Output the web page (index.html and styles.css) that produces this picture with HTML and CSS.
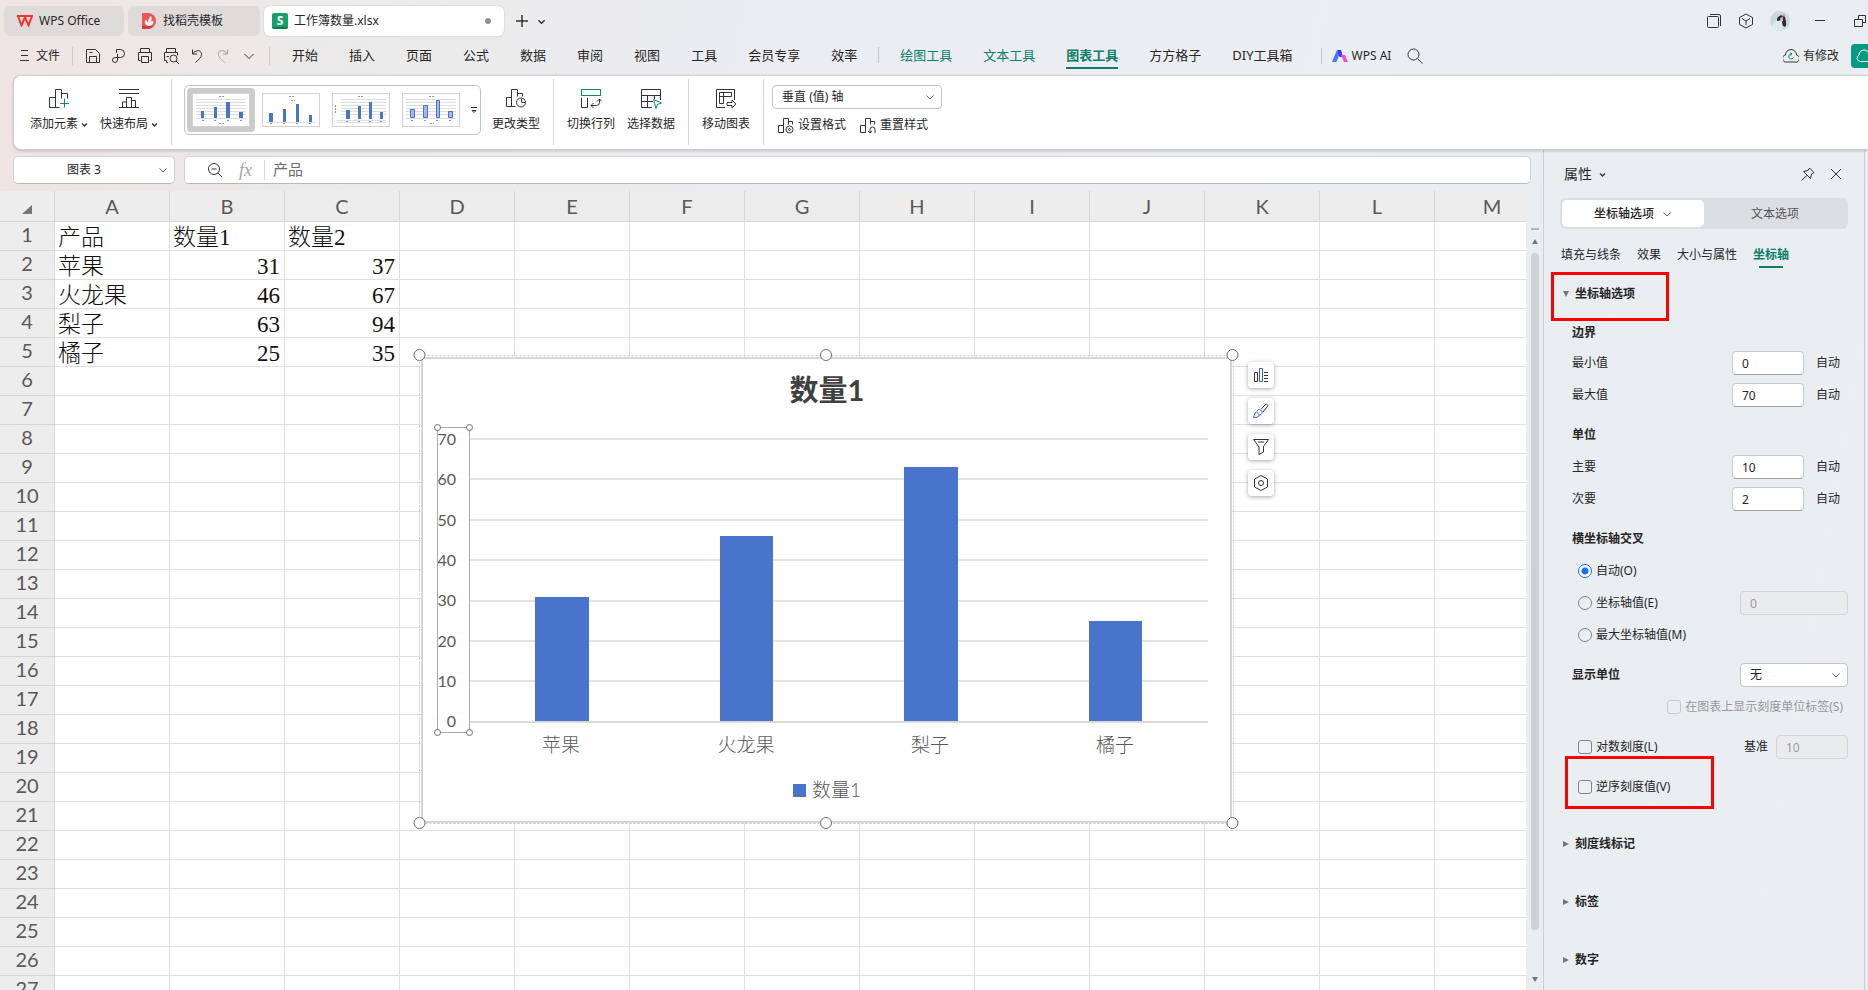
FILE: index.html
```html
<!DOCTYPE html>
<html lang="zh-CN">
<head>
    <meta charset="UTF-8">
    <meta name="viewport" content="width=device-width, initial-scale=1.0">
    <title>工作簿数量.xlsx</title>
    <link rel="stylesheet" href="styles.css">
</head>
<body>
    <!-- shared icons -->
    <svg class="defs" aria-hidden="true">
        <symbol id="i-chevron" viewBox="0 0 10 10"><path d="M1.500 3.500 5 7l3.500-3.500"/></symbol>
    </svg>

    <header class="titlebar">
        <button class="doc-tab">
            <svg class="logo" width="16" height="12" viewBox="0 0 16 12"><path d="M0 1h15L11.500 10.500 7.500 1M1 1l3.500 9.500L8.500 1"/></svg>
            WPS Office
        </button>
        <button class="doc-tab tab-template">
            <svg class="flat" width="14" height="16" viewBox="0 0 14 16"><path d="M0 0h6a8 8 0 0 1 0 16H0z" fill="#f25555"/><path d="M0 13h11a8 8 0 0 1-5 3H0z" fill="#d63a3f"/><path d="M6.500 13C3 12 2.500 9.500 3 7c2 .5 3 2 3.500 3.500C6 7 7 4.500 9 3c1 3 .5 5-.8 7C9 8.500 10 8 11.500 8c0 3-2 5-5 5z" fill="#fff"/></svg>
            找稻壳模板
        </button>
        <button class="doc-tab active">
            <span class="sheet-logo">S</span>
            工作簿数量.xlsx
            <span class="unsaved"></span>
        </button>
        <button class="icon-btn new-tab" aria-label="新建">
            <svg width="16" height="16" viewBox="0 0 16 16" stroke-width="1.500"><path d="M8 2v12M2 8h12"/></svg>
        </button>
        <button class="icon-btn" aria-label="更多标签">
            <svg width="9" height="9" stroke-width="1.500"><use href="#i-chevron"/></svg>
        </button>
        <div class="window-tools">
            <button class="icon-btn" aria-label="标签列表"><svg width="16" height="16" viewBox="0 0 16 16"><rect x="1.500" y="3.500" width="11" height="11" rx="1"/><path d="M4 1.500h9a1.500 1.500 0 0 1 1.500 1.500v10"/></svg></button>
            <button class="icon-btn" aria-label="应用"><svg width="16" height="16" viewBox="0 0 16 16"><path d="M8 1l6.500 3.500v7L8 15l-6.500-3.500v-7zM4 5.500l4 2.500 4-2.500M8 8v4"/></svg></button>
            <button class="icon-btn" aria-label="账号"><svg class="flat" width="20" height="20" viewBox="0 0 20 20"><circle cx="10" cy="10" r="10" fill="#cbd8df"/><path d="M2 16c1-4 4-8 7-8l3 2 1 9a10 10 0 0 1-11-3z" fill="#dcebee"/><path d="M7 8c1-4 7-5 8-2 1 4 2 8 0 10-3-1-3-4-3-7L7 10z" fill="#2e2a35"/><path d="M10 7l3-1v4l-2 1z" fill="#e6b8a8"/><path d="M12 3.500h3v2h-3z" fill="#d9a560"/></svg></button>
            <button class="icon-btn win-min" aria-label="最小化"><svg width="12" height="12" viewBox="0 0 12 12"><path d="M1 5.500h10"/></svg></button>
            <button class="icon-btn win-max" aria-label="还原"><svg width="14" height="14" viewBox="0 0 14 14"><path d="M1.500 5.500h8v7h-8zM5.500 5V1.500h7v7H10"/></svg></button>
        </div>
    </header>

    <nav class="menubar">
        <button class="file-btn">
            <svg width="9" height="12" viewBox="0 0 9 12"><path d="M1 .5h7M1 5.500h7M0 10.500h9"/></svg>
            文件
        </button>
        <div class="quick">
            <button class="icon-btn" aria-label="保存"><svg width="18" height="18" viewBox="0 0 18 18"><path d="M2.500 15.500v-13h9l4 4v9zM5.500 15v-5.500h7V15M5.500 5.500h3"/></svg></button>
            <button class="icon-btn" aria-label="输出PDF"><svg width="18" height="18" viewBox="0 0 18 18"><path d="M6.500 6V2.500h4a4 4 0 0 1 0 8H5a2.500 2.500 0 1 0 2.500 2.500V7"/></svg></button>
            <button class="icon-btn" aria-label="打印"><svg width="18" height="18" viewBox="0 0 18 18"><path d="M4.500 5.500v-4h9v4M4.500 13.500h-2v-8h13v8h-2M5.500 9.500h7v6h-7z"/></svg></button>
            <button class="icon-btn" aria-label="打印预览"><svg width="18" height="18" viewBox="0 0 18 18"><path d="M4.500 5.500v-4h9v4M6 15.500H4.500v-2h-2v-8h13v3M4.500 9.500H7"/><circle cx="11.500" cy="11.500" r="3.500"/><path d="M14 14l3 3"/></svg></button>
            <button class="icon-btn" aria-label="撤销"><svg width="18" height="18" viewBox="0 0 18 18"><path d="M4.500 2.500v4.500H9M4.500 7C7 3 13.500 2 13.500 7.500c0 3-3 5-6 8"/></svg></button>
            <button class="icon-btn faded" aria-label="恢复"><svg width="18" height="18" viewBox="0 0 18 18"><path d="M13.500 2.500v4.500H9M13.500 7C11 3 4.500 2 4.500 7.500c0 3 3 5 6 8"/></svg></button>
            <button class="icon-btn" aria-label="自定义快速访问"><svg width="18" height="18" viewBox="0 0 18 18"><path d="M4.500 7 9 11.500 13.500 7"/></svg></button>
        </div>
        <div class="menu">
            <button>开始</button>
            <button>插入</button>
            <button>页面</button>
            <button>公式</button>
            <button>数据</button>
            <button>审阅</button>
            <button>视图</button>
            <button>工具</button>
            <button>会员专享</button>
            <button>效率</button>
        </div>
        <div class="menu context">
            <button class="green">绘图工具</button>
            <button class="green">文本工具</button>
            <button class="green current">图表工具</button>
            <button>方方格子</button>
            <button>DIY工具箱</button>
        </div>
        <button class="ai-btn">
            <svg class="flat" width="16" height="14" viewBox="0 0 16 14"><path d="M5 1h4L4.500 13H0z" fill="#3f7bff"/><path d="M5.500 1H9l2 7H7.500z" fill="#3b3bf0"/><path d="M9 6h4l3 7h-4z" fill="#f04fd0"/></svg>
            WPS AI
        </button>
        <button class="icon-btn" aria-label="搜索"><svg width="16" height="16" viewBox="0 0 16 16"><circle cx="6.500" cy="6.500" r="5.500"/><path d="M10.500 10.500l5 5"/></svg></button>
        <button class="cloud-btn">
            <svg width="16" height="14" viewBox="0 0 16 14"><path d="M4 13A3.500 3.500 0 0 1 2.500 6a5.500 5.500 0 0 1 11 0A3.500 3.500 0 0 1 12 13z"/><path class="green-line" d="M10.500 8.500a2.500 2.500 0 1 1-2-3.500M7.500 3.500 9 5 7.500 6.500"/></svg>
            有修改
        </button>
        <button class="share-btn" aria-label="分享"><svg width="18" height="14" viewBox="0 0 18 14"><path d="M5 12.500A3.500 3.500 0 0 1 4 6a5 5 0 0 1 10 0v6.500z"/></svg></button>
    </nav>

    <section class="ribbon">
        <div class="group first">
            <button class="tool">
                <svg width="22" height="22" viewBox="0 0 22 22"><path d="M1.500 20.500v-10h6v10zM7.500 20.500V2.500h6v9M13.500 6.500h6v5M7.500 20.500h4"/><path class="green-line" d="M16.500 11.500v9M12 16.500h9"/></svg>
                <span>添加元素<svg width="7" height="7" stroke-width="2"><use href="#i-chevron"/></svg></span>
            </button>
            <button class="tool">
                <svg width="22" height="22" viewBox="0 0 22 22"><path d="M1 2.500h20M1 6.500h20M1 20.500h20M4.500 20v-5h4M8.500 20V10.500h5V20M13.500 13.500h4V20"/></svg>
                <span>快速布局<svg width="7" height="7" stroke-width="2"><use href="#i-chevron"/></svg></span>
            </button>
        </div>
        <div class="group styles">
            <div class="gallery">
                <button class="thumb selected" aria-label="样式1"><svg width="56" height="32" viewBox="0 0 56 32"><path class="lines" d="M3 5.500h50M3 8.500h50M3 11.500h50M3 14.500h50M3 17.500h50M3 20.500h50M3 24.500h50"/><path class="cols" d="M8 17h3v7H8zM21 13h3v11h-3zM33 8h4v16h-4zM46 18h4v6h-4z"/><path class="marks" d="M26 2.500h5M9 26.500h3M21 26.500h3M34 26.500h3M47 26.500h3M26 29.500h5"/></svg></button>
                <button class="thumb" aria-label="样式2"><svg width="56" height="32" viewBox="0 0 56 32"><path class="lines" d="M3 28.500h50"/><path class="cols" d="M6 19h4v9H6zM20 15h3v13h-3zM33 10h3v18h-3zM46 21h3v7h-3z"/><path class="marks" d="M26 2.500h5M7 29.500h3M20 29.500h3M33 29.500h3M46 29.500h3M28 6.500h4"/></svg></button>
                <button class="thumb" aria-label="样式3"><svg width="56" height="32" viewBox="0 0 56 32"><path class="lines" d="M8 5.500h45M8 8.500h45M8 11.500h45M8 14.500h45M8 17.500h45M8 20.500h45M4 26.500h49M4 28.500h49"/><path class="cols" d="M13 16h4v9h-4zM25 12h3v13h-3zM36 8h3v17h-3zM47 18h3v7h-3z"/><path class="marks" d="M25 2.500h5M2.500 11v8M13 27.500h3M25 27.500h3M36 27.500h3M47 27.500h3"/></svg></button>
                <button class="thumb" aria-label="样式4"><svg width="56" height="32" viewBox="0 0 56 32"><path class="lines" d="M3 5.500h50M3 8.500h50M3 11.500h50M3 14.500h50M3 17.500h50M3 20.500h50M3 24.500h50"/><path class="cols pale" d="M7.500 15.500h4v8h-4zM20.500 11.500h4v12h-4zM33.500 6.500h3v17h-3zM45.500 17.500h4v6h-4z"/><path class="marks" d="M26 2.500h5M8 26.500h3M21 26.500h3M33 26.500h3M46 26.500h3M27 29.500h4"/></svg></button>
                <button class="icon-btn more" aria-label="更多样式"><svg width="8" height="8" viewBox="0 0 8 8"><path d="M1 1.500h6M2 4.500h4L4 6.500z"/></svg></button>
            </div>
            <button class="tool">
                <svg width="22" height="22" viewBox="0 0 22 22"><path d="M1.500 19.500v-9h5v9zM6.500 19.500V2.500h6v7M12.500 6.500h5v3M6.500 19.500h4"/><circle cx="16" cy="15.500" r="4.500"/><path d="M16.500 12v3.500H20"/></svg>
                <span>更改类型</span>
            </button>
        </div>
        <div class="group">
            <button class="tool">
                <svg width="22" height="22" viewBox="0 0 22 22"><rect class="green-line" x="1.500" y="2.500" width="19" height="6"/><path d="M1.500 11v9.500h6V11M11 18.500h5.500a3 3 0 0 0 3-3V12M13.500 16 11 18.500l2.500 2.500M17 14.500l2.500-2.500 2.500 2.500"/></svg>
                <span>切换行列</span>
            </button>
            <button class="tool">
                <svg width="22" height="22" viewBox="0 0 22 22"><path d="M12 20.500H1.500v-18h19V13M1.500 8.500h19M1.500 14.500H13M7.500 8.500v12M14.500 8.500V12"/><path class="green-line" d="M13.500 12.500l8 3.500-4 1.500-1.500 4z"/></svg>
                <span>选择数据</span>
            </button>
        </div>
        <div class="group">
            <button class="tool">
                <svg width="22" height="22" viewBox="0 0 22 22"><path d="M10 20.500H1.500v-18h18V13M4.500 16.500v-11h12v4h-12M8.500 5.500v11h-4"/><path d="M12 15.500h5V13l4 4-4 4v-2.500h-5z"/></svg>
                <span>移动图表</span>
            </button>
        </div>
        <div class="format">
            <div class="select-box">
                <select aria-label="图表元素"><option>垂直 (值) 轴</option></select>
                <svg width="10" height="10"><use href="#i-chevron"/></svg>
            </div>
            <div class="format-row">
                <button><svg width="16" height="17" viewBox="0 0 16 17"><path d="M.5 15.500v-7h5v7zM5.500 15.500v-14h5v6M10.500 4.500h4v3"/><circle cx="11.500" cy="12.500" r="3.500"/><circle cx="11.500" cy="12.500" r="1"/></svg>设置格式</button>
                <button><svg width="16" height="17" viewBox="0 0 16 17"><path d="M.5 15.500v-7h5v7zM5.500 15.500v-14h5v6M10.500 4.500h4v3M10 16v-3.500a2.500 2.500 0 0 1 5 0V16M8 14l2 2 2-2"/></svg>重置样式</button>
            </div>
        </div>
    </section>

    <main class="workspace">
        <div class="book">
            <div class="formula-bar">
                <div class="name-box">
                    <input type="text" value="图表 3" aria-label="名称框">
                    <svg width="10" height="10"><use href="#i-chevron"/></svg>
                </div>
                <div class="formula-box">
                    <button class="icon-btn" aria-label="缩小"><svg width="16" height="16" viewBox="0 0 16 16"><circle cx="7" cy="7" r="5.500"/><path d="M4.500 7h5M11 11l4 4"/></svg></button>
                    <span class="fx">fx</span>
                    <input type="text" value="产品" aria-label="编辑栏">
                </div>
            </div>
            <div class="sheet">
                <div class="grid-area">
                    <table class="cells" id="cells"></table>

                    <!-- chart object floating over the cells -->
                    <svg class="chart" width="828" height="484" viewBox="0 0 828 484">
                        <rect x="6.500" y="7.500" width="814" height="468" class="chart-dots"/>
                        <rect x="9" y="10" width="809" height="464" class="chart-frame"/>
                        <text x="414" y="53" class="chart-title">数量1</text>
                        <path class="gridlines" d="M57 91h738M57 131h738M57 172h738M57 212h738M57 253h738M57 293h738M57 333h738"/>
                        <path class="axis" d="M57 374h738"/>
                        <g class="bars">
                            <rect x="122" y="249" width="54" height="124"/>
                            <rect x="307" y="188" width="53" height="185"/>
                            <rect x="491" y="119" width="54" height="254"/>
                            <rect x="676" y="273" width="53" height="100"/>
                        </g>
                        <g class="ticks">
                            <text x="43" y="97">70</text>
                            <text x="43" y="137">60</text>
                            <text x="43" y="178">50</text>
                            <text x="43" y="218">40</text>
                            <text x="43" y="258">30</text>
                            <text x="43" y="299">20</text>
                            <text x="43" y="339">10</text>
                            <text x="43" y="379">0</text>
                        </g>
                        <g class="cats">
                            <text x="148" y="404">苹果</text>
                            <text x="333" y="404">火龙果</text>
                            <text x="517" y="404">梨子</text>
                            <text x="702" y="404">橘子</text>
                        </g>
                        <rect x="380" y="436" width="13" height="13" fill="#4874cb"/>
                        <text x="399" y="449" class="legend">数量1</text>
                        <rect x="24.500" y="79.500" width="32" height="305" class="axis-box"/>
                        <g class="knobs">
                            <circle cx="24.500" cy="79.500" r="3"/>
                            <circle cx="56.500" cy="79.500" r="3"/>
                            <circle cx="24.500" cy="384.500" r="3"/>
                            <circle cx="56.500" cy="384.500" r="3"/>
                            <circle cx="6.500" cy="7" r="5.500"/>
                            <circle cx="413" cy="7" r="5.500"/>
                            <circle cx="819.500" cy="7" r="5.500"/>
                            <circle cx="6.500" cy="475" r="5.500"/>
                            <circle cx="413" cy="475" r="5.500"/>
                            <circle cx="819.500" cy="475" r="5.500"/>
                        </g>
                    </svg>
                    <div class="chart-tools">
                        <button aria-label="图表元素"><svg width="16" height="16" viewBox="0 0 16 16"><path d="M1.500 5.500h3v9h-3zM11 5.500h4M11 8.500h4M11 11.500h4M11 14.500h4"/><path class="blue-line" d="M6.500 1.500h3v13h-3z"/></svg></button>
                        <button aria-label="图表样式"><svg width="16" height="16" viewBox="0 0 16 16"><path d="M8 6.500 12.500 1.500c1-1 3 .5 2 2L10 9"/><path class="blue-line" d="M.5 14.500c1-3 1-5 3-5.500l3 3c-.5 2-3 2.500-6 2.500zM4 8.500c.5-2 2-2.500 3.500-1.500L9 8.500c.5 1.500-.5 3-2 3.500"/></svg></button>
                        <button aria-label="图表筛选器"><svg width="16" height="16" viewBox="0 0 16 16"><path d="M.5 .5h15l-5 7v5.500L6 15.500V8zM5 3h6"/></svg></button>
                        <button aria-label="设置"><svg width="16" height="16" viewBox="0 0 16 16"><path d="M8 .5l6.500 3.500v8L8 15.500 1.500 12V4z"/><circle cx="8" cy="8" r="2.500"/></svg></button>
                    </div>
                </div>
                <div class="scrollbar">
                    <span class="split"></span>
                    <span class="arrow-up"></span>
                    <span class="track"></span>
                    <span class="arrow-down"></span>
                </div>
            </div>
        </div>

        <aside class="panel">
            <div class="panel-head">
                <button class="panel-title">属性<svg width="7" height="7" stroke-width="2"><use href="#i-chevron"/></svg></button>
                <button class="icon-btn pin" aria-label="固定"><svg width="14" height="14" viewBox="0 0 14 14"><path d="M8.500 1 13 5.500l-2.500 1.500L9.500 11.500 2.500 4.500 7 3.500zM6 8.500.5 13.500"/></svg></button>
                <button class="icon-btn" aria-label="关闭"><svg width="12" height="12" viewBox="0 0 12 12"><path d="M1 1l10 10M11 1 1 11"/></svg></button>
            </div>
            <div class="segment">
                <button class="on">坐标轴选项<svg width="10" height="10"><use href="#i-chevron"/></svg></button>
                <button>文本选项</button>
            </div>
            <div class="panel-tabs">
                <button>填充与线条</button>
                <button>效果</button>
                <button>大小与属性</button>
                <button class="current">坐标轴</button>
            </div>

            <button class="section open marked">坐标轴选项</button>
            <div class="options">
                <h4 class="lead">边界</h4>
                <div class="row">
                    <label for="axisMin">最小值</label>
                    <input type="text" id="axisMin" class="field" value="0"><span class="auto">自动</span>
                </div>
                <div class="row">
                    <label for="axisMax">最大值</label>
                    <input type="text" id="axisMax" class="field" value="70"><span class="auto">自动</span>
                </div>
                <h4>单位</h4>
                <div class="row">
                    <label for="unitMajor">主要</label>
                    <input type="text" id="unitMajor" class="field" value="10"><span class="auto">自动</span>
                </div>
                <div class="row">
                    <label for="unitMinor">次要</label>
                    <input type="text" id="unitMinor" class="field" value="2"><span class="auto">自动</span>
                </div>
                <h4>横坐标轴交叉</h4>
                <div class="row choice">
                    <input type="radio" name="cross" id="crossAuto" checked><label for="crossAuto">自动(O)</label>
                </div>
                <div class="row choice">
                    <input type="radio" name="cross" id="crossValue"><label for="crossValue">坐标轴值(E)</label>
                    <input type="text" class="field wide" value="0" aria-label="坐标轴值" disabled>
                </div>
                <div class="row choice">
                    <input type="radio" name="cross" id="crossMax"><label for="crossMax">最大坐标轴值(M)</label>
                </div>
                <div class="row spaced">
                    <label class="strong" for="displayUnit">显示单位</label>
                    <div class="select-box wide">
                        <select id="displayUnit"><option>无</option></select>
                        <svg width="10" height="10"><use href="#i-chevron"/></svg>
                    </div>
                </div>
                <div class="row choice unit-label">
                    <input type="checkbox" id="unitLabel" disabled><label for="unitLabel">在图表上显示刻度单位标签(S)</label>
                </div>
                <div class="row choice spaced">
                    <input type="checkbox" id="logScale"><label for="logScale">对数刻度(L)</label>
                    <label class="base" for="logBase">基准</label>
                    <input type="text" id="logBase" class="field" value="10" disabled>
                </div>
                <div class="row choice spaced marked">
                    <input type="checkbox" id="reverse"><label for="reverse">逆序刻度值(V)</label>
                </div>
            </div>
            <button class="section">刻度线标记</button>
            <button class="section">标签</button>
            <button class="section">数字</button>
        </aside>
    </main>

    <script src="script.js"></script>
</body>
</html>
```
FILE: styles.css
```css
*, *::before, *::after {
    box-sizing: border-box;
}
body {
    margin: 0;
    height: 100vh;
    display: flex;
    flex-direction: column;
    overflow: hidden;
    font-family: "Noto Sans", "Noto Sans CJK SC", sans-serif;
    font-size: 12px;
    line-height: 18px;
    color: #262626;
    background: linear-gradient(100deg, #efe5e3 0, #ebebeb 20%, #ecedf2 42%, #e9eef1 88%, #ecedf2 100%);
}
button, input, select {
    font: inherit;
    color: inherit;
}
button {
    display: flex;
    align-items: center;
    flex: none;
    padding: 0;
    border: 0;
    background: none;
    white-space: nowrap;
}
svg {
    flex: none;
    fill: none;
    stroke: #333;
}
.defs {
    display: none;
}
.flat {
    stroke: none;
}
.green-line {
    stroke: #0f8a63;
}
.blue-line {
    stroke: #2b5fe3;
}

/* title bar */
.titlebar {
    display: flex;
    align-items: center;
    height: 42px;
    padding: 0 1px 0 4px;
}
.doc-tab {
    width: 120px;
    height: 30px;
    margin-right: 4px;
    padding-left: 13px;
    gap: 6px;
    border-radius: 6px;
    background: #dfdbdb;
}
.logo {
    stroke: #f5372a;
    stroke-width: 2;
}
.tab-template {
    width: 132px;
    padding-left: 14px;
    gap: 7px;
}
.doc-tab.active {
    width: 240px;
    padding-left: 8px;
    background: #fff;
    box-shadow: 0 0 2px #bbb;
}
.sheet-logo {
    width: 16px;
    height: 16px;
    border-radius: 2px;
    border-bottom: 2px solid #0a7a4c;
    background: #16a06c;
    color: #fff;
    font-weight: 700;
    line-height: 15px;
}
.unsaved {
    width: 6px;
    height: 6px;
    margin: 0 13px 0 auto;
    border-radius: 50%;
    background: #919191;
}
.new-tab {
    margin: 0 7px 0 6px;
}
.window-tools {
    display: flex;
    align-items: center;
    gap: 16px;
    margin-left: auto;
}
.win-min {
    margin-left: 8px;
}
.win-max {
    margin-left: 11px;
}

/* menu bar */
.menubar {
    display: flex;
    align-items: center;
    height: 27px;
    margin-bottom: 6px;
    padding-left: 20px;
}
.file-btn {
    gap: 7px;
    padding-right: 12px;
}
.quick {
    display: flex;
    gap: 8px;
    padding: 0 11px;
    border-left: 1px solid #ccc;
    border-right: 1px solid #ccc;
}
.faded {
    opacity: 0.4;
}
.menu {
    display: flex;
    gap: 31px;
    padding: 0 21px 0 22px;
    font-size: 13px;
}
.menu button {
    height: 27px;
    border-bottom: 2px solid transparent;
}
.context {
    padding-right: 28px;
    position: relative;
}
.context::before, .ai-btn::before {
    content: "";
    position: absolute;
    left: 0;
    top: 5px;
    height: 16px;
    border-left: 1px solid #c6c7ca;
}
.menu .green {
    color: #0b7f69;
}
.menu .current {
    font-weight: 700;
    border-bottom-color: #0b7f69;
}
.ai-btn {
    position: relative;
    height: 26px;
    gap: 4px;
    padding-left: 11px;
    margin-right: 16px;
}
.cloud-btn {
    gap: 4px;
    margin-left: auto;
}
.share-btn {
    width: 17px;
    height: 24px;
    margin-left: 12px;
    padding-left: 4px;
    overflow: hidden;
    border-radius: 4px 0 0 4px;
    background: #069a83;
}
.share-btn svg {
    stroke: #fff;
}

/* ribbon */
.ribbon {
    display: flex;
    flex: none;
    height: 75px;
    margin-left: 13px;
    border: 1px solid #cfd0d3;
    border-right: 0;
    border-radius: 8px 0 0 8px;
    background: #fff;
    box-shadow: 0 1px 3px rgba(0, 0, 0, 0.2);
    position: relative;
}
.group {
    display: flex;
    align-items: flex-start;
    gap: 12px;
    height: 66px;
    margin-top: 3px;
    padding: 8px 13px 0;
    border-right: 1px solid #d6d6d6;
}
.group.first {
    padding-left: 16px;
}
.group.styles {
    gap: 11px;
    padding-left: 12px;
}
.tool {
    flex-direction: column;
    gap: 6px;
}
.tool span {
    display: flex;
    align-items: center;
    gap: 3px;
}
.gallery {
    display: flex;
    align-items: center;
    gap: 2px;
    width: 297px;
    height: 50px;
    margin-top: -2px;
    padding-left: 2px;
    border: 1px solid #c4c4c4;
    border-radius: 5px;
}
.thumb {
    width: 68px;
    height: 44px;
    justify-content: center;
    border-radius: 4px;
}
.thumb svg {
    background: #fff;
    outline: 1px solid #d2d2d2;
}
.thumb.selected {
    background: #cbcbcb;
}
.thumb .lines {
    stroke: #dedede;
}
.thumb .cols {
    fill: #4874cb;
    stroke: none;
}
.thumb .pale {
    fill: #a3b9e5;
    stroke: #4874cb;
}
.thumb .marks {
    stroke: #999;
    stroke-dasharray: 2 1;
}
.more {
    margin-left: 3px;
}
.format {
    padding: 9px 8px;
}
.select-box {
    position: relative;
    display: flex;
    width: 170px;
}
.select-box select {
    appearance: none;
    width: 100%;
    height: 24px;
    padding: 0 9px;
    border: 1px solid #c4c4c4;
    border-radius: 4px;
    background: #fff;
}
.select-box svg {
    position: absolute;
    right: 7px;
    top: 7px;
    pointer-events: none;
}
.select-box svg, .name-box svg, .segment svg {
    stroke: #666;
}
.format-row {
    display: flex;
    gap: 14px;
    padding: 7px 0 0 6px;
}
.format-row button {
    gap: 4px;
}

/* sheet */
.workspace {
    display: flex;
    flex: 1;
    min-height: 0;
}
.book {
    display: flex;
    flex-direction: column;
    flex: 1;
    min-width: 0;
}
.formula-bar {
    display: flex;
    gap: 9px;
    padding: 6px 12px 7px 13px;
}
.name-box, .formula-box {
    display: flex;
    align-items: center;
    height: 28px;
    border: 1px solid #d2d2d2;
    border-bottom-color: #b9b9b9;
    border-radius: 5px;
    background: #fff;
}
.name-box {
    width: 162px;
    padding-right: 6px;
}
.formula-box {
    flex: 1;
    padding-left: 22px;
}
.formula-bar input {
    width: 100%;
    min-width: 0;
    border: 0;
    background: none;
}
.name-box input {
    padding: 0 4px 0 0;
    text-align: center;
}
.fx {
    margin: 0 12px 0 16px;
    color: #a5a5a5;
    font: italic 18px/20px "Liberation Serif", serif;
}
.formula-box input {
    padding: 0 8px 2px;
    border-left: 1px solid #d8d8d8;
    font-size: 15px;
    line-height: 18px;
    color: #6b6b6b;
}
.sheet {
    display: flex;
    flex: 1;
    min-height: 0;
}
.grid-area {
    position: relative;
    flex: 1;
    min-width: 0;
    overflow: hidden;
    background: #fff;
}
.cells {
    width: 1550px;
    table-layout: fixed;
    border-collapse: separate;
    border-spacing: 0;
}
.cells th, .cells td {
    width: 115px;
    height: 29px;
    padding: 0 4px 0 3px;
    border-right: 1px solid #e0e0e0;
    border-bottom: 1px solid #e0e0e0;
    line-height: 28px;
}
.cells th {
    padding: 0 3px;
    background: #ededed;
    color: #595959;
    font-family: Lato, sans-serif;
    font-size: 20px;
    font-weight: 400;
    border-color: #d6d6d6;
}
.cells thead th {
    height: 31px;
}
.cells th:first-child {
    width: 55px;
}
.cells tbody th {
    padding-bottom: 4px;
    line-height: 24px;
}
.cells td {
    padding-top: 4px;
    font-family: "Liberation Serif", "Noto Sans CJK SC", serif;
    font-size: 23px;
    font-weight: 300;
    line-height: 24px;
    color: #111;
    white-space: nowrap;
}
.cells td.num {
    text-align: right;
}
.cells .corner::after {
    content: "";
    display: inline-block;
    border-left: 10px solid transparent;
    border-bottom: 9px solid #777;
}

/* chart */
.chart {
    position: absolute;
    left: 413px;
    top: 157px;
    stroke: none;
    font-family: Lato, "Noto Sans CJK SC", sans-serif;
}
.chart-frame {
    fill: #fff;
    stroke: #d6d6d6;
    stroke-width: 2;
}
.chart-dots {
    stroke: #c9c9c9;
    stroke-dasharray: 2 2;
}
.chart-title {
    fill: #404040;
    font-size: 29px;
    font-weight: 700;
    text-anchor: middle;
}
.gridlines {
    stroke: #e4e4e4;
    stroke-width: 2;
}
.axis {
    stroke: #d9d9d9;
    stroke-width: 2;
}
.bars {
    fill: #4874cb;
}
.ticks, .cats, .legend {
    fill: #595959;
    font-size: 16px;
    text-anchor: end;
}
.cats {
    font-size: 19px;
    font-weight: 300;
    text-anchor: middle;
}
.legend {
    font-size: 19px;
    font-weight: 300;
    text-anchor: start;
}
.axis-box {
    stroke: #a8a8b0;
}
.knobs {
    fill: #fff;
    stroke: #6e6e6e;
}
.chart-tools {
    position: absolute;
    left: 1248px;
    top: 171px;
    display: grid;
    gap: 10px;
}
.chart-tools button {
    width: 26px;
    height: 26px;
    justify-content: center;
    border-radius: 4px;
    background: #fff;
    box-shadow: 0 1px 4px rgba(0, 0, 0, 0.35);
}

/* scrollbar */
.scrollbar {
    display: flex;
    flex-direction: column;
    align-items: center;
    width: 17px;
    padding: 37px 0 8px;
}
.split {
    width: 8px;
    height: 2px;
    background: #b4b5b8;
}
.arrow-up, .arrow-down {
    border: 3px solid transparent;
    border-top: 0;
    border-bottom: 5px solid #777;
}
.arrow-up {
    margin: 9px 0;
}
.arrow-down {
    margin-top: 47px;
    border-top: 5px solid #777;
    border-bottom: 0;
}
.track {
    flex: 1;
    width: 8px;
    border-radius: 4px;
    background: #d0d1d5;
}

/* properties panel */
.panel {
    width: 322px;
    margin-right: 3px;
    padding: 0 16px;
    border-left: 1px solid #cdced2;
    border-right: 1px solid #cdced2;
}
.panel-head {
    display: flex;
    align-items: center;
    height: 48px;
    padding-right: 6px;
}
.panel-title {
    gap: 7px;
    margin-right: auto;
    padding-left: 4px;
    font-size: 14px;
}
.pin {
    margin-right: 15px;
}
.segment {
    display: flex;
    padding: 2px;
    border-radius: 6px;
    background: #dcdfe2;
    color: #555;
}
.segment button {
    flex: 1;
    height: 27px;
    justify-content: center;
    gap: 8px;
    border-radius: 5px;
}
.segment .on {
    background: #fff;
    color: #222;
    font-weight: 500;
}
.panel-tabs {
    display: flex;
    align-items: center;
    gap: 16px;
    height: 52px;
    padding-left: 1px;
}
.panel-tabs .current {
    position: relative;
    color: #0b7f69;
    font-weight: 700;
}
.panel-tabs .current::after {
    content: "";
    position: absolute;
    left: 6px;
    right: 6px;
    bottom: -4px;
    height: 2px;
    background: #0b7f69;
}
.section {
    height: 26px;
    margin-bottom: 32px;
    padding-left: 3px;
    font-weight: 700;
}
.section::before {
    content: "";
    margin-right: 6px;
    border: 3px solid transparent;
    border-left: 6px solid #777;
    border-right: 0;
}
.section.open {
    margin-bottom: 12px;
}
.section.open::before {
    border: 3px solid transparent;
    border-top: 6px solid #777;
    border-bottom: 0;
}
.options {
    padding-left: 12px;
    margin-bottom: 28px;
}
.options h4 {
    margin: 8px 0 0;
    font-size: 12px;
    line-height: 32px;
}
.options .lead {
    margin: 0;
    line-height: 28px;
}
.row {
    display: flex;
    align-items: center;
    height: 32px;
}
.spaced {
    margin-top: 8px;
}
.strong {
    font-weight: 700;
}
.field {
    width: 72px;
    height: 24px;
    margin-left: auto;
    padding: 0 9px;
    border: 1px solid #c8cacd;
    border-bottom-color: #a0a2a5;
    border-radius: 4px;
    background: #fff;
}
.wide {
    width: 108px;
    margin-left: auto;
}
.field:disabled {
    border-color: #d2d4d7;
    background: #ebecee;
    color: #999;
}
.auto {
    margin: 0 8px 0 12px;
}
.choice {
    padding-left: 6px;
}
.choice input[type="radio"], .choice input[type="checkbox"] {
    appearance: none;
    width: 14px;
    height: 14px;
    margin: 0 4px 0 0;
    border: 1px solid #808388;
    border-radius: 3px;
}
.choice input[type="radio"] {
    border-radius: 50%;
}
.choice input[type="radio"]:checked {
    border-color: #1271ff;
    background: radial-gradient(#1271ff 3px, #fff 4px);
}
.choice input[type="checkbox"]:disabled {
    border-color: #c8cacd;
}
.unit-label {
    justify-content: flex-end;
    padding-right: 5px;
    color: #999;
}
.base {
    margin: 0 8px 0 auto;
}
.base + .field {
    margin-left: 0;
}

/* red callouts around the two settings to change */
.marked {
    position: relative;
}
.marked::after {
    content: "";
    position: absolute;
    left: -7px;
    top: -15px;
    width: 149px;
    height: 53px;
    border: 3px solid #f00;
}
.section.marked::after {
    left: -9px;
    top: -9px;
    width: 118px;
    height: 49px;
}
```
FILE: script.js
```js
const data = [
    ['产品', '数量1', '数量2'],
    ['苹果', 31, 37],
    ['火龙果', 46, 67],
    ['梨子', 63, 94],
    ['橘子', 25, 35],
];
const letters = 'ABCDEFGHIJKLM'.split('');

let html = '<thead><tr><th class="corner"></th>';
letters.forEach((letter) => {
    html += `<th>${letter}</th>`;
});
html += '</tr></thead><tbody>';

for (let r = 0; r < 27; r++) {
    html += `<tr><th>${r + 1}</th>`;
    letters.forEach((letter, c) => {
        const value = data[r]?.[c] ?? '';
        html += `<td${typeof value === 'number' ? ' class="num"' : ''}>${value}</td>`;
    });
    html += '</tr>';
}
document.getElementById('cells').innerHTML = html + '</tbody>';
```
